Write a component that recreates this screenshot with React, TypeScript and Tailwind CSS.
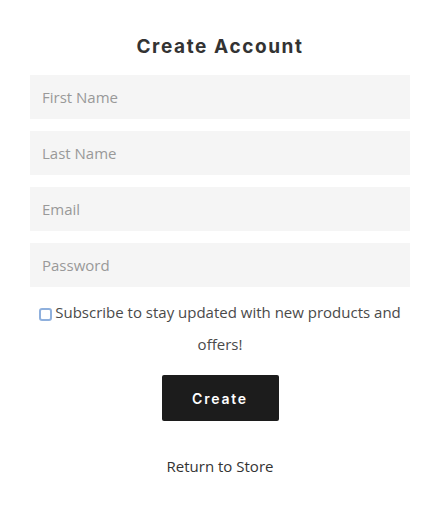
import { useState } from "react";

const fields = [
  { name: "first_name", placeholder: "First Name", type: "text" },
  { name: "last_name", placeholder: "Last Name", type: "text" },
  { name: "email", placeholder: "Email", type: "email" },
  { name: "password", placeholder: "Password", type: "password" },
];

export default function App() {
  const [subscribe, setSubscribe] = useState(false);

  return (
    <div className="min-h-[505px] w-full bg-white font-['Open_Sans',sans-serif] text-[#3d3d3d]">
      <form
        className="ml-[30px] flex w-[380px] flex-col items-center pt-[34px]"
        onSubmit={(e) => e.preventDefault()}
      >
        <h1 className="mb-[15px] font-['Inter',sans-serif] text-[19px] font-bold leading-[26px] tracking-[1.6px] text-[#333]">
          Create Account
        </h1>

        <div className="flex w-full flex-col gap-[12px]">
          {fields.map((f) => (
            <input
              key={f.name}
              name={f.name}
              type={f.type}
              placeholder={f.placeholder}
              className="h-[44px] w-full bg-[#f5f5f5] px-[12px] text-[15px] text-[#333] outline-none placeholder:text-[#999]"
            />
          ))}
        </div>

        <label className="mt-[9px] block px-[2px] text-center text-[15px] leading-[32px] text-[#4a4a4a]">
          <input
            type="checkbox"
            checked={subscribe}
            onChange={(e) => setSubscribe(e.target.checked)}
            className="mr-[3px] inline-block h-[13px] w-[13px] translate-y-[1px] cursor-pointer appearance-none rounded-[3px] border-2 border-[#8fb0dd] bg-white align-middle checked:bg-[#8fb0dd]"
          />
          Subscribe to stay updated with new products and offers!
        </label>

        <button
          type="submit"
          className="mt-[15px] h-[46px] w-[117px] rounded-[2px] bg-[#1c1c1c] font-['Inter',sans-serif] text-[14px] font-semibold tracking-[1.8px] text-white"
        >
          Create
        </button>

        <a href="#" className="mt-[34px] text-[15px] leading-[22px] text-[#333]">
          Return to Store
        </a>
      </form>
    </div>
  );
}
